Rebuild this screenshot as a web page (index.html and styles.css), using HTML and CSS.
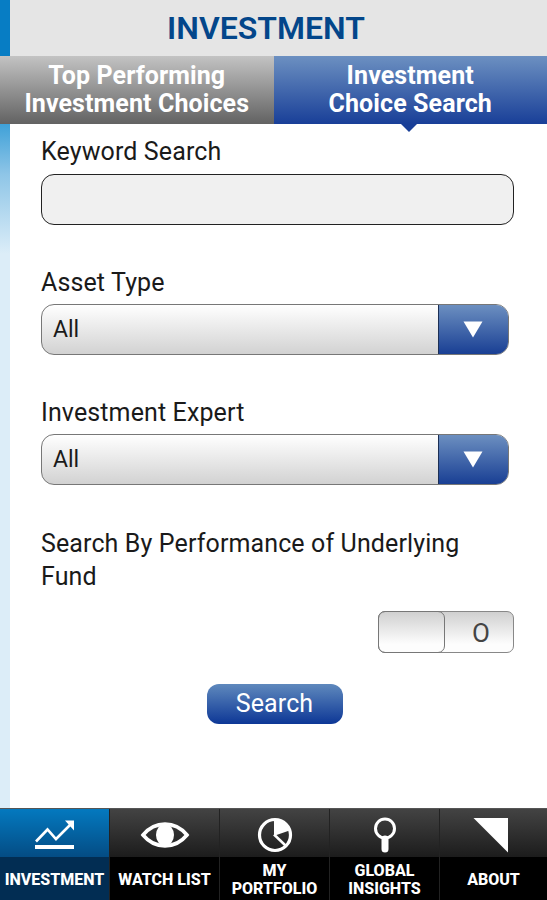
FILE: index.html
```
<!DOCTYPE html>
<html lang="en">
<head>
  <meta charset="UTF-8">
  <meta name="viewport" content="width=device-width, initial-scale=1.0">
  <title>Investment Choice Search</title>
  <link rel="stylesheet" href="styles.css">
</head>
<body>

  <header>
    <h1>INVESTMENT</h1>
  </header>

  <div class="tabs">
    <div class="tab">Top Performing<br>Investment Choices</div>
    <div class="tab active">Investment<br>Choice Search</div>
  </div>

  <main>
    <form class="search-form">
      <div class="field">
        <label for="keyword">Keyword Search</label>
        <input id="keyword" class="text-input" type="text">
      </div>

      <div class="field">
        <label>Asset Type</label>
        <div class="dropdown">
          <span class="value">All</span>
          <span class="arrow"><svg width="20" height="17" viewBox="0 0 20 17"><path d="M0.5 0.5h19L10 16.5z" fill="#fff"/></svg></span>
        </div>
      </div>

      <div class="field">
        <label>Investment Expert</label>
        <div class="dropdown">
          <span class="value">All</span>
          <span class="arrow"><svg width="20" height="17" viewBox="0 0 20 17"><path d="M0.5 0.5h19L10 16.5z" fill="#fff"/></svg></span>
        </div>
      </div>

      <label class="performance">Search By Performance of Underlying Fund</label>

      <div class="toggle">
        <span class="knob"></span>
        <span class="off">O</span>
      </div>

      <button class="search-button" type="button">Search</button>
    </form>
  </main>

  <nav>
    <a class="nav-item active">
      <span class="icon">
        <svg width="42" height="32" viewBox="0 0 42 32" fill="none" stroke="#fff">
          <path d="M2 22.500L13.500 10.500L22 20L36 6" stroke-width="2.600"/>
          <path d="M31 1.500h9v10z" fill="#fff" stroke="none"/>
          <path d="M1 28h39" stroke-width="3.800"/>
        </svg>
      </span>
      <span class="text">INVESTMENT</span>
    </a>
    <a class="nav-item">
      <span class="icon">
        <svg width="50" height="28" viewBox="0 0 50 28">
          <path d="M3 14C15 -0.500 35 -0.500 47 14C35 28.500 15 28.500 3 14z" fill="none" stroke="#fff" stroke-width="3.600"/>
          <ellipse cx="25" cy="14" rx="9" ry="11" fill="#fff"/>
        </svg>
      </span>
      <span class="text">WATCH LIST</span>
    </a>
    <a class="nav-item">
      <span class="icon">
        <svg width="36" height="36" viewBox="0 0 36 36">
          <circle cx="18" cy="18" r="15.500" fill="none" stroke="#fff" stroke-width="3.200"/>
          <path d="M17 18V3H18A15 15 0 0 1 32.500 13.500L18 18.500z" fill="#fff"/>
          <path d="M17 17.500L28.500 28.500" fill="none" stroke="#fff" stroke-width="2.500"/>
        </svg>
      </span>
      <span class="text">MY<br>PORTFOLIO</span>
    </a>
    <a class="nav-item">
      <span class="icon">
        <svg width="24" height="36" viewBox="0 0 24 36">
          <circle cx="12" cy="11.500" r="9.500" fill="none" stroke="#fff" stroke-width="3"/>
          <path d="M12 22V32" stroke="#fff" stroke-width="7" stroke-linecap="round"/>
        </svg>
      </span>
      <span class="text">GLOBAL<br>INSIGHTS</span>
    </a>
    <a class="nav-item">
      <span class="icon about-icon">
        <svg width="36" height="36" viewBox="0 0 36 36"><path d="M0.500 1H35V35.500z" fill="#fff"/></svg>
      </span>
      <span class="text">ABOUT</span>
    </a>
  </nav>

</body>
</html>
```

FILE: styles.css
```
* {
  box-sizing: border-box;
}

body {
  display: flex;
  flex-direction: column;
  height: 100vh;
  margin: 0;
  overflow: hidden;
  font-family: Roboto, "Liberation Sans", sans-serif;
  background-color: #fff;
  color: #1a1a1a;
}

header {
  height: 56px;
  flex: none;
  border-left: 10px solid #077dc4;
  background-color: #e5e5e5;
  text-align: center;
}

h1 {
  margin: 0;
  padding-right: 25px;
  font-size: 32px;
  font-weight: 600;
  line-height: 56px;
  color: #03468a;
}

/* Tabs */
.tabs {
  display: flex;
  flex: none;
  height: 68px;
}

.tab {
  flex: 1;
  padding-top: 6px;
  font-size: 25px;
  font-weight: 700;
  line-height: 28px;
  letter-spacing: 0.1px;
  text-align: center;
  color: #fff;
  background: linear-gradient(#c3c3c3, #626262);
}

.tab.active {
  position: relative;
  background: linear-gradient(#6c90c1, #193f98);
}

.tab.active::after {
  content: "";
  position: absolute;
  left: 50%;
  top: 100%;
  margin-left: -9px;
  border: 8px solid transparent;
  border-top-color: #193f98;
  border-bottom: 0;
}

/* Search form */
main {
  flex: 1;
  padding: 11px 33px 0 41px;
  background: linear-gradient(#3fa1d8, #8ec5e7 50px, #dcedf8 130px, #dcedf8) no-repeat left top / 10px 100%;
}

.search-form {
  display: flex;
  flex-direction: column;
}

label {
  display: block;
  font-size: 25px;
  line-height: 33px;
  letter-spacing: 0.12px;
}

.field {
  height: 130.5px;
}

.text-input {
  display: block;
  width: 473px;
  height: 51px;
  margin-top: 6px;
  border: 1px solid #222;
  border-radius: 13px;
  background-color: #f0f0f0;
}

.dropdown {
  display: flex;
  width: 468px;
  height: 51px;
  margin-top: 5px;
  overflow: hidden;
  border: 1px solid #777;
  border-radius: 13px;
  background: linear-gradient(#fff, #d2d2d2);
}

.value {
  flex: 1;
  padding-left: 11px;
  font-size: 23px;
  line-height: 49px;
}

.arrow {
  display: flex;
  align-items: center;
  justify-content: center;
  width: 70px;
  padding-right: 2px;
  border-left: 1px solid #1c2f55;
  background: linear-gradient(#6c8fc0, #193f94);
}

.toggle {
  display: flex;
  align-self: flex-end;
  width: 136px;
  height: 42px;
  margin-top: 18px;
  border: 1px solid #888;
  border-radius: 7px;
  background: linear-gradient(#d0d0d0, #fdfdfd 80%);
}

.knob {
  width: 67px;
  margin: -1px 0 -1px -1px;
  border: 1px solid #777;
  border-radius: 7px;
}

.off {
  flex: 1;
  padding-left: 4px;
  font-size: 26px;
  line-height: 42px;
  text-align: center;
  color: #444;
}

.search-button {
  align-self: center;
  width: 136px;
  height: 40px;
  margin: 31px 6px 0 0;
  padding: 0;
  border: 0;
  border-radius: 12px;
  font-family: inherit;
  font-size: 25px;
  letter-spacing: 0.12px;
  color: #fff;
  background: linear-gradient(#5f89bd, #0d3796);
}

/* Bottom navigation */
nav {
  display: flex;
  flex: none;
  height: 92px;
  border-top: 1px solid #555;
  background-color: #000;
}

.nav-item {
  display: flex;
  flex: none;
  flex-direction: column;
  width: 110px;
  border-right: 1px solid #222;
}

.nav-item:last-child {
  flex: 1;
  border-right: 0;
}

.icon {
  display: flex;
  align-items: center;
  justify-content: center;
  height: 48px;
  padding-top: 4px;
  background: linear-gradient(#434343, #1c1c1c);
}

.about-icon {
  padding-right: 6px;
}

.text {
  display: flex;
  flex: 1;
  align-items: center;
  justify-content: center;
  padding-top: 2px;
  font-size: 16px;
  font-weight: 800;
  line-height: 18px;
  text-align: center;
  color: #fff;
}

.nav-item.active .icon {
  background: linear-gradient(#0479bf, #044c84);
}

.nav-item.active .text {
  background-color: #022d53;
}
```
